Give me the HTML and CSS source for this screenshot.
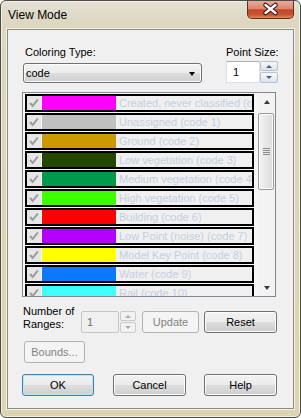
FILE: index.html
```html
<!DOCTYPE html>
<html lang="en">
<head>
    <meta charset="UTF-8">
    <title>View Mode</title>
    <link rel="stylesheet" href="styles.css">
</head>
<body>
    <div class="window">
        <div class="titlebar">
            <span class="title">View Mode</span>
            <div class="close">
                <svg width="47" height="18" viewBox="0 0 47 18">
                    <path d="M18.5 5 L28.5 13 M28.5 5 L18.5 13" stroke="#3a1610" stroke-width="4.6" stroke-linecap="round"/>
                    <path d="M18.5 5 L28.5 13 M28.5 5 L18.5 13" stroke="#ffffff" stroke-width="2.4" stroke-linecap="round"/>
                </svg>
            </div>
        </div>

        <div class="client">
            <div class="top-row">
                <div class="field coloring">
                    <span class="label">Coloring Type:</span>
                    <div class="combo">
                        <span>code</span>
                        <span class="combo-arrow"></span>
                    </div>
                </div>
                <div class="field point-size">
                    <span class="label">Point Size:</span>
                    <div class="spin">
                        <div class="spin-input">1</div>
                        <div class="spin-buttons">
                            <span class="spin-btn"><i class="tri-up"></i></span>
                            <span class="spin-btn"><i class="tri-down"></i></span>
                        </div>
                    </div>
                </div>
            </div>

            <div class="listbox">
                <div class="items">
                    <div class="item"><span class="check"></span><span class="swatch c0"></span><span class="name">Created, never classified (code 0)</span></div>
                    <div class="item"><span class="check"></span><span class="swatch c1"></span><span class="name">Unassigned (code 1)</span></div>
                    <div class="item"><span class="check"></span><span class="swatch c2"></span><span class="name">Ground (code 2)</span></div>
                    <div class="item"><span class="check"></span><span class="swatch c3"></span><span class="name">Low vegetation (code 3)</span></div>
                    <div class="item"><span class="check"></span><span class="swatch c4"></span><span class="name">Medium vegetation (code 4)</span></div>
                    <div class="item"><span class="check"></span><span class="swatch c5"></span><span class="name">High vegetation (code 5)</span></div>
                    <div class="item"><span class="check"></span><span class="swatch c6"></span><span class="name">Building (code 6)</span></div>
                    <div class="item"><span class="check"></span><span class="swatch c7"></span><span class="name">Low Point (noise) (code 7)</span></div>
                    <div class="item"><span class="check"></span><span class="swatch c8"></span><span class="name">Model Key Point (code 8)</span></div>
                    <div class="item"><span class="check"></span><span class="swatch c9"></span><span class="name">Water (code 9)</span></div>
                    <div class="item"><span class="check"></span><span class="swatch c10"></span><span class="name">Rail (code 10)</span></div>
                </div>
                <div class="scrollbar">
                    <div class="sb-arrow"><i class="sb-up"></i></div>
                    <div class="sb-thumb">
                        <span class="grip"></span>
                        <span class="grip"></span>
                        <span class="grip"></span>
                        <span class="grip"></span>
                    </div>
                    <div class="sb-arrow sb-bottom"><i class="sb-down"></i></div>
                </div>
            </div>

            <div class="ranges-row">
                <span class="ranges-label">Number of<br>Ranges:</span>
                <div class="spin disabled">
                    <div class="spin-input">1</div>
                    <div class="spin-buttons">
                        <span class="spin-btn"><i class="tri-up"></i></span>
                        <span class="spin-btn"><i class="tri-down"></i></span>
                    </div>
                </div>
                <button class="btn disabled update">Update</button>
                <button class="btn reset">Reset</button>
            </div>

            <button class="btn disabled bounds">Bounds...</button>

            <div class="dialog-buttons">
                <button class="btn default ok">OK</button>
                <button class="btn cancel">Cancel</button>
                <button class="btn help">Help</button>
            </div>
        </div>
    </div>
</body>
</html>
```

FILE: styles.css
```css
body {
    margin: 0;
    font-family: "Liberation Sans", Arial, sans-serif;
    font-size: 11px;
    color: #000;
}

.window {
    width: 301px;
    height: 418px;
    box-sizing: border-box;
    border: 1px solid #4b4b4b;
    border-radius: 6px;
    padding: 0 6px 8px;
    background: linear-gradient(180deg, #e4e1d6 0%, #ddd7c2 20px, #dcd3b2 60%, #ddd4b2 100%);
    box-shadow: inset 0 0 0 1px #f4f0e0;
}

.titlebar {
    height: 28px;
    display: flex;
    justify-content: space-between;
    align-items: flex-start;
}

.title {
    margin: 7px 0 0 1px;
    font-size: 12px;
    line-height: 15px;
}

.close {
    width: 47px;
    height: 18px;
    box-sizing: border-box;
    border: 1px solid #6a2a1c;
    border-top: none;
    border-radius: 0 0 5px 5px;
    background: linear-gradient(180deg, #e8ab99 0%, #d98770 45%, #c3462c 52%, #c9532f 80%, #e0895a 100%);
}

.close svg {
    display: block;
    margin: -1px 0 0 -1px;
}

.client {
    height: 380px;
    box-sizing: border-box;
    border: 1px solid #8a8a8a;
    background-color: #f0f0f0;
    padding-top: 16px;
    box-shadow: 0 0 0 1px #f6f2e2;
}

/* top controls */
.top-row {
    display: flex;
    margin-left: 15px;
}

.coloring {
    width: 179px;
}

.point-size {
    margin-left: 24px;
}

.label {
    display: block;
    line-height: 13px;
}

.coloring .label {
    padding-left: 2px;
}

.combo {
    margin-top: 4px;
    height: 20px;
    box-sizing: border-box;
    border: 1px solid #707070;
    border-radius: 3px;
    padding-left: 2px;
    display: flex;
    align-items: center;
    background: linear-gradient(180deg, #f2f2f2 0%, #ebebeb 50%, #dddddd 50%, #cfcfcf 100%);
    box-shadow: inset 0 0 0 1px #fcfcfc;
}

.combo-arrow {
    margin: 1px 6px 0 auto;
    border-top: 4px solid #000;
    border-left: 3.5px solid transparent;
    border-right: 3.5px solid transparent;
}

.spin {
    display: flex;
    margin-top: 2px;
}

.spin-input {
    width: 34px;
    height: 22px;
    box-sizing: border-box;
    border: 1px solid #dbdfe6;
    border-top-color: #abadb3;
    background-color: #fff;
    padding-left: 6px;
    line-height: 20px;
}

.spin-buttons {
    width: 18px;
    display: flex;
    flex-direction: column;
    gap: 1px;
}

.spin-btn {
    height: 10px;
    box-sizing: border-box;
    border: 1px solid #b6c1d2;
    border-radius: 2px;
    background: linear-gradient(180deg, #f6f8fb 0%, #dde3ec 100%);
    display: flex;
    align-items: center;
    justify-content: center;
}

.spin-btn:last-child {
    height: 11px;
}

.tri-up {
    border-bottom: 3px solid #4d5a78;
    border-left: 3px solid transparent;
    border-right: 3px solid transparent;
}

.tri-down {
    border-top: 3px solid #4d5a78;
    border-left: 3px solid transparent;
    border-right: 3px solid transparent;
}

.spin.disabled {
    margin-top: 6px;
}

.spin.disabled .spin-input {
    width: 38px;
    border: 1px solid #c5c5c5;
    border-radius: 2px;
    background-color: #f0f0f0;
    color: #6d6d6d;
    padding-left: 5px;
}

.spin.disabled .spin-buttons {
    width: 16px;
    margin-left: 1px;
}

.spin.disabled .spin-btn {
    border-color: #cacaca;
    background: #f2f2f2;
}

.spin.disabled .tri-up {
    border-bottom-color: #acacac;
}

.spin.disabled .tri-down {
    border-top-color: #acacac;
}

/* list */
.listbox {
    margin: 9px 0 0 14px;
    width: 254px;
    height: 205px;
    box-sizing: border-box;
    border: 1px solid #828790;
    background-color: #f6f6f6;
    display: flex;
}

.items {
    flex: 1;
    padding: 1px 0 0 2px;
    overflow: hidden;
}

.item {
    width: 229px;
    height: 18px;
    box-sizing: border-box;
    border: 2px solid #000;
    margin-bottom: 1px;
    display: flex;
    align-items: stretch;
    background-color: #f0f0f0;
}

.check {
    width: 15px;
    flex-shrink: 0;
    box-sizing: border-box;
    border-right: 1px solid #fafafa;
    background: #e6e6e6 url("data:image/svg+xml,%3Csvg xmlns='http://www.w3.org/2000/svg' width='15' height='14'%3E%3Cpath d='M3.5 7 L6 10 L11 3.5' fill='none' stroke='%239c9c9c' stroke-width='2'/%3E%3C/svg%3E") no-repeat center;
}

.swatch {
    width: 74px;
    flex-shrink: 0;
}

.name {
    margin-left: 3px;
    white-space: nowrap;
    overflow: hidden;
    line-height: 14px;
    color: #c2cfdf;
}

.c0 { background-color: #ff00ff; }
.c1 { background-color: #c0c0c0; }
.c2 { background-color: #cc9900; }
.c3 { background-color: #234700; }
.c4 { background-color: #009a4d; }
.c5 { background-color: #3cff00; }
.c6 { background-color: #ff0000; }
.c7 { background-color: #b300ff; }
.c8 { background-color: #ffff00; }
.c9 { background-color: #0a78ff; }
.c10 { background-color: #40ffff; }

.scrollbar {
    width: 17px;
    display: flex;
    flex-direction: column;
    background-color: #f3f3f3;
}

.sb-arrow {
    height: 17px;
    display: flex;
    align-items: center;
    justify-content: center;
}

.sb-bottom {
    margin-top: auto;
}

.sb-up {
    border-bottom: 4px solid #3c3c3c;
    border-left: 3.5px solid transparent;
    border-right: 3.5px solid transparent;
}

.sb-down {
    border-top: 4px solid #3c3c3c;
    border-left: 3.5px solid transparent;
    border-right: 3.5px solid transparent;
}

.sb-thumb {
    margin: 3px 1px 0 0;
    height: 77px;
    box-sizing: border-box;
    border: 1px solid #9b9b9b;
    border-radius: 2px;
    background: linear-gradient(90deg, #f3f3f3 0%, #e8e8e8 50%, #dcdcdc 100%);
    box-shadow: inset 0 0 0 1px #fbfbfb;
    display: flex;
    flex-direction: column;
    align-items: center;
    justify-content: center;
    gap: 1px;
}

.grip {
    width: 7px;
    height: 1px;
    background-color: #8a8a8a;
}

/* bottom controls */
.ranges-row {
    display: flex;
    align-items: flex-start;
    margin: 8px 0 0 15px;
}

.ranges-label {
    width: 58px;
    line-height: 13px;
}

.btn {
    height: 22px;
    box-sizing: border-box;
    border: 1px solid #707070;
    border-radius: 3px;
    padding: 0;
    font-family: inherit;
    font-size: 11px;
    color: #000;
    background: linear-gradient(180deg, #f2f2f2 0%, #ebebeb 50%, #dddddd 50%, #cfcfcf 100%);
    box-shadow: inset 0 0 0 1px #fcfcfc;
}

.btn.disabled {
    border-color: #adb2b5;
    background: #f4f4f4;
    color: #838383;
    box-shadow: none;
}

.btn.default {
    border-color: #3c7fb1;
    box-shadow: inset 0 0 0 1px #bfe3f7;
}

.update {
    margin: 6px 0 0 6px;
    width: 57px;
}

.reset {
    margin: 6px 0 0 5px;
    width: 73px;
}

.bounds {
    display: block;
    margin: 8px 0 0 16px;
    width: 61px;
}

.dialog-buttons {
    display: flex;
    margin: 11px 0 0 14px;
}

.ok {
    width: 72px;
}

.cancel {
    width: 73px;
    margin-left: 19px;
}

.help {
    width: 73px;
    margin-left: 18px;
}
```
